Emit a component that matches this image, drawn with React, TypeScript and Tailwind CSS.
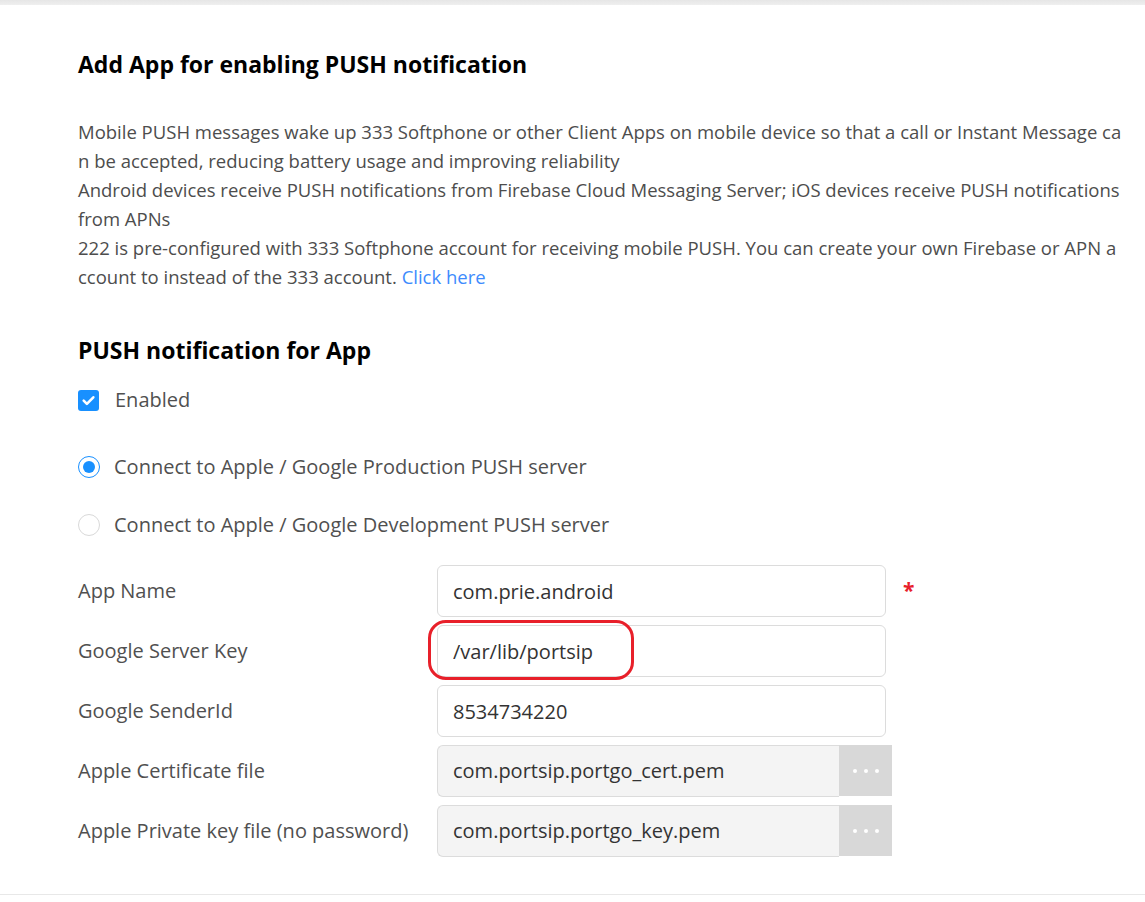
import { useState } from 'react';

const font = { fontFamily: '"Open Sans", "Noto Sans", sans-serif' };

function Field({
  label,
  value,
  required,
  marked,
}: {
  label: string;
  value: string;
  required?: boolean;
  marked?: boolean;
}) {
  return (
    <div className="flex items-center h-[52px]">
      <div className="w-[359px] text-[20px] text-[#505050]">{label}</div>
      <div className="relative w-[449px] h-[52px]">
        <input
          readOnly
          value={value}
          className="w-full h-full rounded-md border border-[#dcdcdc] bg-white px-[15px] text-[20px] text-[#333] outline-none"
        />
        {marked && (
          <div className="pointer-events-none absolute left-[-9px] top-[-5px] w-[206px] h-[60px] rounded-[18px] border-[3px] border-[#e8202a]" />
        )}
      </div>
      {required && (
        <span className="ml-[17px] text-[21px] font-bold text-[#e8202a]">*</span>
      )}
    </div>
  );
}

function FileField({ label, value }: { label: string; value: string }) {
  return (
    <div className="flex items-center h-[52px]">
      <div className="w-[359px] text-[20px] text-[#505050]">{label}</div>
      <div className="flex w-[455px] h-[52px]">
        <div className="flex-1 flex items-center rounded-l-md border border-r-0 border-[#dcdcdc] bg-[#f4f4f4] px-[15px] text-[20px] text-[#333]">
          {value}
        </div>
        <button
          type="button"
          className="w-[53px] h-[51px] bg-[#d8d8d8] flex items-center justify-center gap-[7px]"
        >
          <span className="w-[4px] h-[4px] rounded-full bg-white" />
          <span className="w-[4px] h-[4px] rounded-full bg-white" />
          <span className="w-[4px] h-[4px] rounded-full bg-white" />
        </button>
      </div>
    </div>
  );
}

export default function App() {
  const [enabled, setEnabled] = useState(true);
  const [server, setServer] = useState<'prod' | 'dev'>('prod');

  return (
    <div className="min-h-[902px] bg-white" style={font}>
      <div className="h-[5px] bg-gradient-to-b from-[#e6e6e6] to-[#efefef]" />
      <div className="pl-[78px] pr-[23px] pt-[43px]">
        <h2 className="text-[23px] leading-[32px] font-bold text-black">
          Add App for enabling PUSH notification
        </h2>

        {/* Description */}
        <div className="mt-[37px] text-[18.5px] leading-[29px] text-[#4d4d4d] break-all">
          <p>
            Mobile PUSH messages wake up 333 Softphone or other Client Apps on mobile device so that a call or Instant Message can be accepted, reducing battery usage and improving reliability
          </p>
          <p>
            Android devices receive PUSH notifications from Firebase Cloud Messaging Server; iOS devices receive PUSH notifications from APNs
          </p>
          <p>
            222 is pre-configured with 333 Softphone account for receiving mobile PUSH. You can create your own Firebase or APN account to instead of the 333 account.{' '}
            <a href="#" className="text-[#3d8bfd]">
              Click here
            </a>
          </p>
        </div>

        <h3 className="mt-[43px] text-[23px] leading-[32px] font-bold text-black">
          PUSH notification for App
        </h3>

        {/* Enabled */}
        <label className="mt-[20px] flex items-center h-[28px] gap-[16px] cursor-pointer">
          <span
            onClick={() => setEnabled((v) => !v)}
            className={`w-[21px] h-[21px] rounded-[3px] flex items-center justify-center ${enabled ? 'bg-[#1890ff]' : 'border border-[#d9d9d9] bg-white'}`}
          >
            {enabled && (
              <svg width="15" height="15" viewBox="0 0 14 14" fill="none">
                <path
                  d="M2.5 7.2l3 3 6-6.2"
                  stroke="white"
                  strokeWidth="2.4"
                  strokeLinecap="round"
                  strokeLinejoin="round"
                />
              </svg>
            )}
          </span>
          <span className="text-[20px] text-[#505050]">Enabled</span>
        </label>

        {/* Server radios */}
        {(
          [
            ['prod', 'Connect to Apple / Google Production PUSH server', 'mt-[39px]'],
            ['dev', 'Connect to Apple / Google Development PUSH server', 'mt-[30px]'],
          ] as const
        ).map(([val, text, mt]) => (
          <label
            key={val}
            onClick={() => setServer(val)}
            className={`${mt} flex items-center h-[28px] gap-[14px] cursor-pointer`}
          >
            <span
              className={`w-[22px] h-[22px] rounded-full border flex items-center justify-center bg-white ${server === val ? 'border-[#1890ff]' : 'border-[#d9d9d9]'}`}
            >
              {server === val && (
                <span className="w-[12px] h-[12px] rounded-full bg-[#1890ff]" />
              )}
            </span>
            <span className="text-[20px] text-[#505050]">{text}</span>
          </label>
        ))}

        {/* Form */}
        <div className="mt-[26px] flex flex-col gap-[8px]">
          <Field label="App Name" value="com.prie.android" required />
          <Field label="Google Server Key" value="/var/lib/portsip" marked />
          <Field label="Google SenderId" value="8534734220" />
          <FileField label="Apple Certificate file" value="com.portsip.portgo_cert.pem" />
          <FileField
            label="Apple Private key file (no password)"
            value="com.portsip.portgo_key.pem"
          />
        </div>
      </div>
      <div className="mt-[37px] h-px bg-[#e8e8e8]" />
    </div>
  );
}
